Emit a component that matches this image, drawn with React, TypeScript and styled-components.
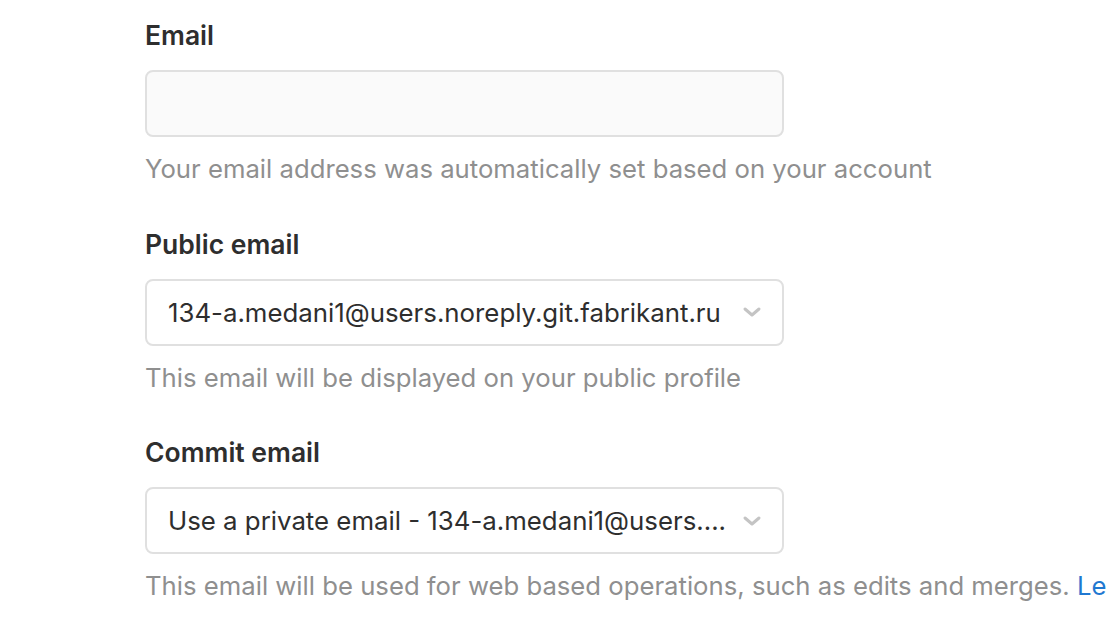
import React from "react";
import styled, { createGlobalStyle } from "styled-components";

const Global = createGlobalStyle`
  html, body { margin: 0; padding: 0; background: #fff; overflow: hidden; }
  body { font-family: Inter, "Noto Sans", "Liberation Sans", sans-serif; -webkit-font-smoothing: antialiased; }
`;

const Page = styled.div`
  width: 1106px;
  height: 624px;
  padding: 18px 0 0 145px;
  box-sizing: border-box;
  display: flex;
  flex-direction: column;
  gap: 40.5px;
  overflow: hidden;
`;

const Group = styled.div`
  display: flex;
  flex-direction: column;
`;

const Label = styled.label`
  font-size: 26.5px;
  font-weight: 600;
  line-height: 34px;
  color: #2e2e2e;
  margin-bottom: 18px;
`;

const Field = styled.div<{ $readonly?: boolean }>`
  width: 639px;
  height: 67px;
  box-sizing: border-box;
  border: 2px solid #e0e0e0;
  border-radius: 8px;
  background: ${(p) => (p.$readonly ? "#fafafa" : "#fff")};
  display: flex;
  align-items: center;
  padding: 0 20px 0 21px;
  gap: 16px;
`;

const Value = styled.span`
  flex: 1;
  font-size: 25.8px;
  color: #2e2e2e;
  white-space: nowrap;
  overflow: hidden;
`;

const Chevron = styled.svg`
  width: 20px;
  height: 12px;
  flex: none;
`;

const Help = styled.p`
  margin: 15px 0 0;
  font-size: 25.7px;
  line-height: 34px;
  color: #8f8f8f;
  white-space: nowrap;
`;

const Link = styled.a`
  color: #1f78d1;
  text-decoration: none;
`;

const Arrow = () => (
  <Chevron viewBox="0 0 20 12">
    <path d="M3 3 L10 9 L17 3" fill="none" stroke="#c4c4c4" strokeWidth="3" strokeLinecap="round" strokeLinejoin="round" />
  </Chevron>
);

export default function App() {
  return (
    <>
      <Global />
      <Page>
        <Group>
          <Label>Email</Label>
          <Field $readonly />
          <Help>Your email address was automatically set based on your account</Help>
        </Group>
        <Group>
          <Label>Public email</Label>
          <Field>
            <Value>134-a.medani1@users.noreply.git.fabrikant.ru</Value>
            <Arrow />
          </Field>
          <Help>This email will be displayed on your public profile</Help>
        </Group>
        <Group>
          <Label>Commit email</Label>
          <Field>
            <Value>Use a private email - 134-a.medani1@users....</Value>
            <Arrow />
          </Field>
          <Help>
            This email will be used for web based operations, such as edits and merges. <Link href="#">Learn more</Link>
          </Help>
        </Group>
      </Page>
    </>
  );
}
